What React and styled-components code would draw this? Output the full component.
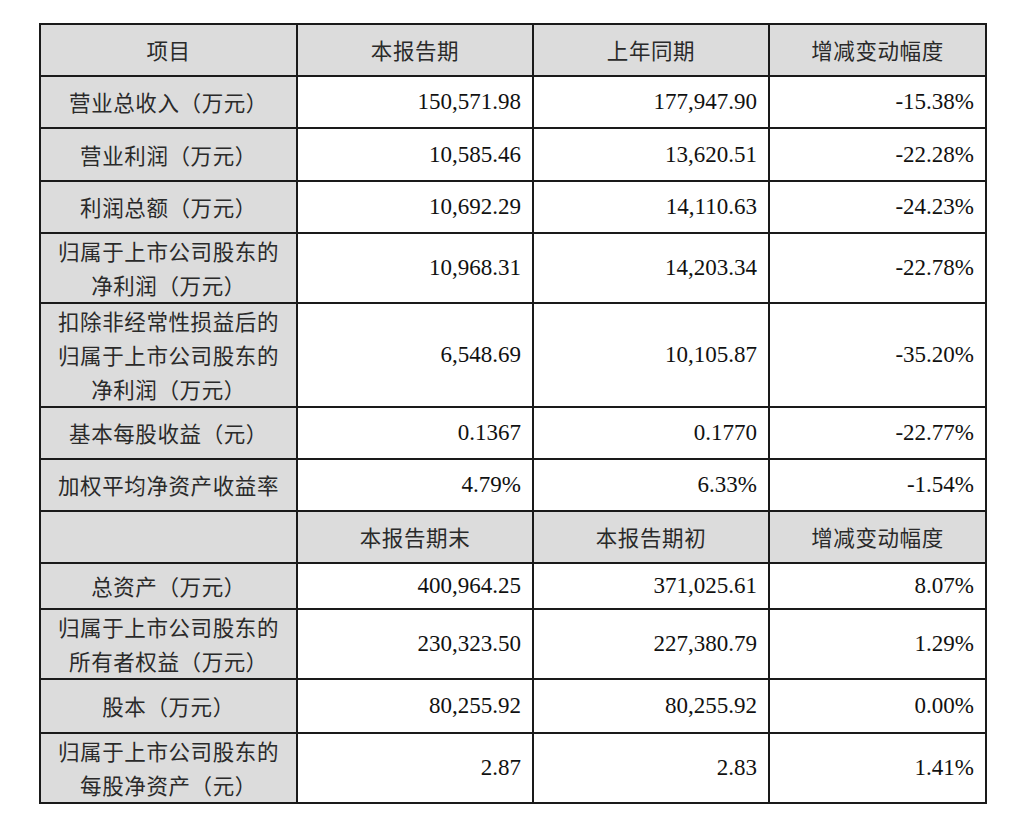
import React from 'react';
import styled, { createGlobalStyle } from 'styled-components';

const GlobalStyle = createGlobalStyle`
	html, body {
		margin: 0;
		padding: 0;
		background: #fff;
	}
	body {
		padding: 23px 0 0 39px;
	}
`;

const Table = styled.table`
	border-collapse: collapse;
	table-layout: fixed;
	width: 946px;
	font-family: "Liberation Serif", "Noto Sans CJK SC", serif;
	color: #1c1c1c;
`;

const Col = styled.col`
	width: ${p => p.$w}px;
`;

const Cell = styled.td`
	border: 2px solid #1a1a1a;
	height: ${p => p.$h}px;
	padding: 0 11px;
	box-sizing: border-box;
	vertical-align: middle;
	background: ${p => (p.$gray ? '#dcdcdc' : '#fff')};
	text-align: ${p => (p.$right ? 'right' : 'center')};
	font-size: ${p => (p.$right ? '23px' : '21.5px')};
	font-family: ${p => (p.$right ? '"Liberation Serif", serif' : '"Noto Sans CJK SC", sans-serif')};
	font-weight: 400;
	line-height: 34px;
	letter-spacing: ${p => (p.$right ? '0' : '0.6px')};
	color: ${p => (p.$right ? '#111' : '#2a2a2a')};
`;

const rows = [
	{ head: true, h: 52, cells: ['项目', '本报告期', '上年同期', '增减变动幅度'] },
	{ h: 52, label: ['营业总收入（万元）'], cells: ['150,571.98', '177,947.90', '-15.38%'] },
	{ h: 53, label: ['营业利润（万元）'], cells: ['10,585.46', '13,620.51', '-22.28%'] },
	{ h: 52, label: ['利润总额（万元）'], cells: ['10,692.29', '14,110.63', '-24.23%'] },
	{ h: 70, label: ['归属于上市公司股东的', '净利润（万元）'], cells: ['10,968.31', '14,203.34', '-22.78%'] },
	{ h: 103, label: ['扣除非经常性损益后的', '归属于上市公司股东的', '净利润（万元）'], cells: ['6,548.69', '10,105.87', '-35.20%'] },
	{ h: 52, label: ['基本每股收益（元）'], cells: ['0.1367', '0.1770', '-22.77%'] },
	{ h: 52, label: ['加权平均净资产收益率'], cells: ['4.79%', '6.33%', '-1.54%'] },
	{ head: true, h: 52, cells: ['', '本报告期末', '本报告期初', '增减变动幅度'] },
	{ h: 46, label: ['总资产（万元）'], cells: ['400,964.25', '371,025.61', '8.07%'] },
	{ h: 70, label: ['归属于上市公司股东的', '所有者权益（万元）'], cells: ['230,323.50', '227,380.79', '1.29%'] },
	{ h: 54, label: ['股本（万元）'], cells: ['80,255.92', '80,255.92', '0.00%'] },
	{ h: 68, label: ['归属于上市公司股东的', '每股净资产（元）'], cells: ['2.87', '2.83', '1.41%'] },
];

const widths = [257, 236, 236, 217];

const Label = ({ lines }) => lines.map((l, i) => (
	<React.Fragment key={i}>
		{i > 0 && <br />}
		{l}
	</React.Fragment>
));

export default function App() {
	return (
		<>
			<GlobalStyle />
			<Table>
				<colgroup>
					{widths.map((w, i) => <Col key={i} $w={w} />)}
				</colgroup>
				<tbody>
					{rows.map((r, i) => (
						<tr key={i}>
							{r.head
								? r.cells.map((c, j) => (
									<Cell key={j} $h={r.h} $gray>{c}</Cell>
								))
								: (
									<>
										<Cell $h={r.h} $gray><Label lines={r.label} /></Cell>
										{r.cells.map((c, j) => (
											<Cell key={j} $h={r.h} $right>{c}</Cell>
										))}
									</>
								)}
						</tr>
					))}
				</tbody>
			</Table>
		</>
	);
}
